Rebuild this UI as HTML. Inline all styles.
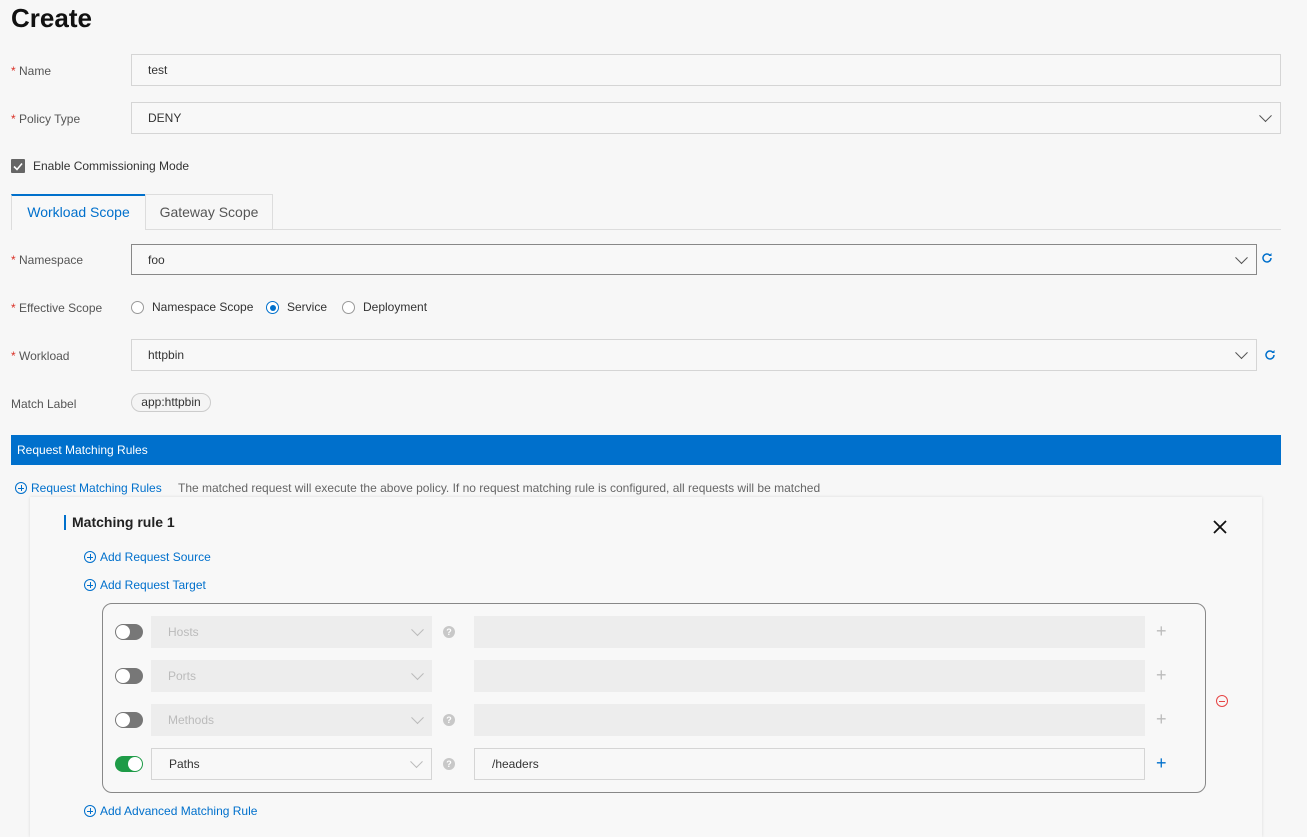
<!DOCTYPE html>
<html><head><meta charset="utf-8"><style>
*{box-sizing:border-box;margin:0;padding:0}
body{width:1307px;height:826px;overflow:hidden;background:#f7f7f7;font-family:"Segoe UI","Liberation Sans",sans-serif;font-size:12px;color:#333;position:relative}
.a{position:absolute}
.lbl{position:absolute;left:11px;color:#555;font-size:12px;line-height:14px}
.lbl b{color:#d93026;font-weight:normal}
.inp{position:absolute;left:131px;border:1px solid #d5d5d5;background:#f8f8f8;padding-left:16px;font-size:12px;color:#333;display:flex;align-items:center}
.chev{position:absolute;right:10px;top:50%;width:9px;height:9px;border-right:1.5px solid #555;border-bottom:1.5px solid #555;transform:translateY(-75%) rotate(45deg)}
.link{position:absolute;color:#0070cc;font-size:12px;display:flex;align-items:center;line-height:14px}
.pc{width:12px;height:12px;border:1px solid #0070cc;border-radius:50%;position:relative;margin-right:4px}
.pc:before{content:"";position:absolute;left:2px;right:2px;top:4.5px;height:1px;background:#0070cc}
.pc:after{content:"";position:absolute;top:2px;bottom:2px;left:4.5px;width:1px;background:#0070cc}
.tog{position:absolute;left:115px;width:28px;height:16px;border-radius:8px;background:#777}
.tog:after{content:"";position:absolute;left:1px;top:1px;width:14px;height:14px;border-radius:50%;background:#fff}
.tog.on{background:#1e9b47}.tog.on:after{left:13px}
.sel{position:absolute;left:151px;width:281px;height:32px;background:#ededed;color:#bbb;padding-left:17px;display:flex;align-items:center}
.sel .chev{border-color:#bbb}
.q{position:absolute;left:443px;width:12px;height:12px;border-radius:50%;background:#c8c8c8;color:#fff;font-size:9px;font-weight:bold;text-align:center;line-height:12px}
.ti{position:absolute;left:474px;width:671px;height:32px;background:#ededed;padding-left:17px;display:flex;align-items:center}
.pl{position:absolute;left:1156px;color:#bbb;font-size:18px;line-height:18px;font-weight:300}
.radio{display:inline-block;width:13px;height:13px;border:1px solid #999;border-radius:50%;vertical-align:middle;margin-right:8px;background:#fff;position:relative}
.radio.on{border-color:#0070cc}
.radio.on:after{content:"";position:absolute;left:2.5px;top:2.5px;width:6px;height:6px;border-radius:50%;background:#0070cc}
</style></head><body>
<div class="a" style="left:11px;top:3px;font-size:26px;font-weight:600;color:#111">Create</div>

<div class="lbl" style="top:64px"><b>*</b> Name</div>
<div class="inp" style="top:54px;width:1150px;height:32px">test</div>
<div class="lbl" style="top:112px"><b>*</b> Policy Type</div>
<div class="inp" style="top:102px;width:1150px;height:32px">DENY<span class="chev"></span></div>

<div class="a" style="left:11px;top:159px;width:14px;height:14px;background:#666;border-radius:1px"><svg width="14" height="14"><path d="M3 7.5l3 3 5-6" stroke="#fff" stroke-width="1.6" fill="none"/></svg></div>
<div class="a" style="left:33px;top:159px;color:#333">Enable Commissioning Mode</div>

<div class="a" style="left:11px;top:229px;width:1270px;height:1px;background:#ddd"></div>
<div class="a" style="left:11px;top:194px;width:135px;height:36px;border:1px solid #ddd;border-top:2px solid #0070cc;border-bottom:none;background:#f8f8f8;color:#0070cc;font-size:14px;text-align:center;line-height:33px">Workload Scope</div>
<div class="a" style="left:145px;top:194px;width:128px;height:35px;border:1px solid #ddd;border-bottom:none;color:#555;font-size:14px;text-align:center;line-height:34px">Gateway Scope</div>

<div class="lbl" style="top:253px"><b>*</b> Namespace</div>
<div class="inp" style="top:244px;width:1126px;height:31px;border-color:#888">foo<span class="chev"></span></div>
<svg class="a" style="left:1261px;top:252px" width="12" height="12" viewBox="0 0 12 12"><path d="M10 6a4 4 0 1 1-1.2-2.9" stroke="#0070cc" stroke-width="1.5" fill="none"/><path d="M10.5 1v3h-3z" fill="#0070cc"/></svg>

<div class="lbl" style="top:301px"><b>*</b> Effective Scope</div>
<div class="a" style="left:131px;top:300px;color:#333"><span class="radio"></span>Namespace Scope</div>
<div class="a" style="left:266px;top:300px;color:#333"><span class="radio on"></span>Service</div>
<div class="a" style="left:342px;top:300px;color:#333"><span class="radio"></span>Deployment</div>

<div class="lbl" style="top:349px"><b>*</b> Workload</div>
<div class="inp" style="top:339px;width:1126px;height:32px">httpbin<span class="chev"></span></div>
<svg class="a" style="left:1264px;top:349px" width="12" height="12" viewBox="0 0 12 12"><path d="M10 6a4 4 0 1 1-1.2-2.9" stroke="#0070cc" stroke-width="1.5" fill="none"/><path d="M10.5 1v3h-3z" fill="#0070cc"/></svg>

<div class="lbl" style="top:397px">Match Label</div>
<div class="a" style="left:131px;top:393px;width:80px;height:19px;border:1px solid #ccc;border-radius:10px;text-align:center;line-height:17px;color:#333;background:#f4f4f4">app:httpbin</div>

<div class="a" style="left:11px;top:435px;width:1270px;height:30px;background:#0070cc;color:#fff;padding-left:6px;line-height:30px">Request Matching Rules</div>

<div class="link" style="left:15px;top:481px"><span class="pc"></span>Request Matching Rules</div>
<div class="a" style="left:178px;top:481px;color:#666">The matched request will execute the above policy. If no request matching rule is configured, all requests will be matched</div>

<div class="a" style="left:30px;top:497px;width:1232px;height:340px;background:#f8f8f8;box-shadow:0 0 3px rgba(0,0,0,.12)"></div>
<div class="a" style="left:64px;top:515px;width:2px;height:15px;background:#0070cc"></div>
<div class="a" style="left:72px;top:514px;font-size:14px;font-weight:600;color:#222">Matching rule 1</div>
<svg class="a" style="left:1213px;top:520px" width="14" height="14"><path d="M1 1l12 12M13 1L1 13" stroke="#111" stroke-width="1.8"/></svg>

<div class="link" style="left:84px;top:550px"><span class="pc"></span>Add Request Source</div>
<div class="link" style="left:84px;top:578px"><span class="pc"></span>Add Request Target</div>

<div class="a" style="left:102px;top:603px;width:1104px;height:190px;border:1px solid #888;border-radius:10px"></div>

<div class="tog" style="top:624px"></div><div class="sel" style="top:616px">Hosts<span class="chev"></span></div><div class="q" style="top:626px">?</div><div class="ti" style="top:616px"></div><div class="pl" style="top:622px">+</div>
<div class="tog" style="top:668px"></div><div class="sel" style="top:660px">Ports<span class="chev"></span></div><div class="ti" style="top:660px"></div><div class="pl" style="top:666px">+</div>
<div class="tog" style="top:712px"></div><div class="sel" style="top:704px">Methods<span class="chev"></span></div><div class="q" style="top:714px">?</div><div class="ti" style="top:704px"></div><div class="pl" style="top:710px">+</div>
<div class="tog on" style="top:756px"></div><div class="sel" style="top:748px;background:#f8f8f8;border:1px solid #d5d5d5;color:#333">Paths<span class="chev"></span></div><div class="q" style="top:758px">?</div><div class="ti" style="top:748px;background:#f8f8f8;border:1px solid #d5d5d5;color:#333">/headers</div><div class="pl" style="top:754px;color:#0070cc">+</div>

<div class="a" style="left:1216px;top:695px;width:12px;height:12px;border:1px solid #e64545;border-radius:50%"><div style="position:absolute;left:2px;right:2px;top:4.5px;height:1.2px;background:#e64545"></div></div>

<div class="link" style="left:84px;top:804px"><span class="pc"></span>Add Advanced Matching Rule</div>
</body></html>
